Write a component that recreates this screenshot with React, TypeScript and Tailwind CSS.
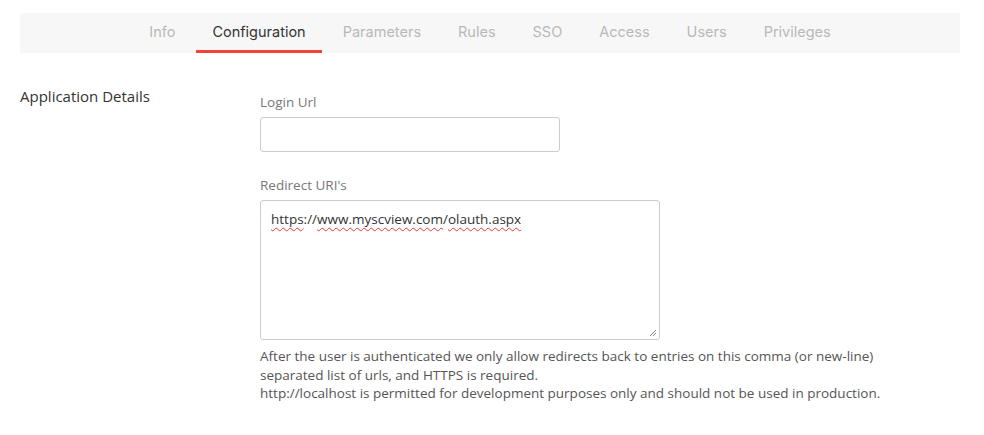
import React from "react";

const tabs = ["Info", "Configuration", "Parameters", "Rules", "SSO", "Access", "Users", "Privileges"];

function Squiggle({ children }: { children: React.ReactNode }) {
  return (
    <span className="underline decoration-wavy decoration-[#e53935] decoration-1 underline-offset-[3px] [text-decoration-skip-ink:none]">
      {children}
    </span>
  );
}

export default function App() {
  return (
    <div className="min-h-[435px] bg-white pt-[13px] pl-5 pr-6 font-['Open_Sans',Arial,sans-serif]">
      <nav className="flex h-10 w-[940px] items-stretch justify-center gap-[5px] bg-[#f7f7f7] font-['Inter',sans-serif] text-[14.5px]">
        {tabs.map((t) => {
          const active = t === "Configuration";
          return (
            <div
              key={t}
              className={
                "flex items-center border-b-[3px] px-4 " +
                (active ? "border-[#f44336] text-[#333]" : "border-transparent text-[#b9b9b9]")
              }
            >
              {t}
            </div>
          );
        })}
      </nav>

      <div className="mt-[33px] flex">
        <div className="w-[240px] text-[15px] leading-[20px] text-[#333]">Application Details</div>
        <div className="pt-[6px]">
          <label className="block text-[13.5px] leading-[20px] text-[#777]">Login Url</label>
          <input
            className="mt-[5px] block h-[35px] w-[300px] rounded-[3px] border border-[#ccc] bg-white px-2 text-[13.5px] outline-none"
            type="text"
          />

          <label className="mt-[23px] block text-[13.5px] leading-[20px] text-[#777]">Redirect URI's</label>
          <div className="relative mt-[5px] h-[140px] w-[400px] rounded-[3px] border border-[#ccc] bg-white px-[10px] pt-[8px] text-[13.5px] leading-[20px] text-[#333]">
            <Squiggle>https</Squiggle>://<Squiggle>www.myscview.com</Squiggle>/<Squiggle>olauth.aspx</Squiggle>
            <svg className="absolute bottom-[2px] right-[2px]" width="8" height="8" viewBox="0 0 8 8">
              <path d="M7 1 L1 7 M7 4 L4 7" stroke="#888" strokeWidth="1" />
            </svg>
          </div>

          <p className="mt-[7px] text-[13.5px] leading-[18.5px] text-[#555]">
            After the user is authenticated we only allow redirects back to entries on this comma (or new-line)
            <br />
            separated list of urls, and HTTPS is required.
            <br />
            http://localhost is permitted for development purposes only and should not be used in production.
          </p>
        </div>
      </div>
    </div>
  );
}
